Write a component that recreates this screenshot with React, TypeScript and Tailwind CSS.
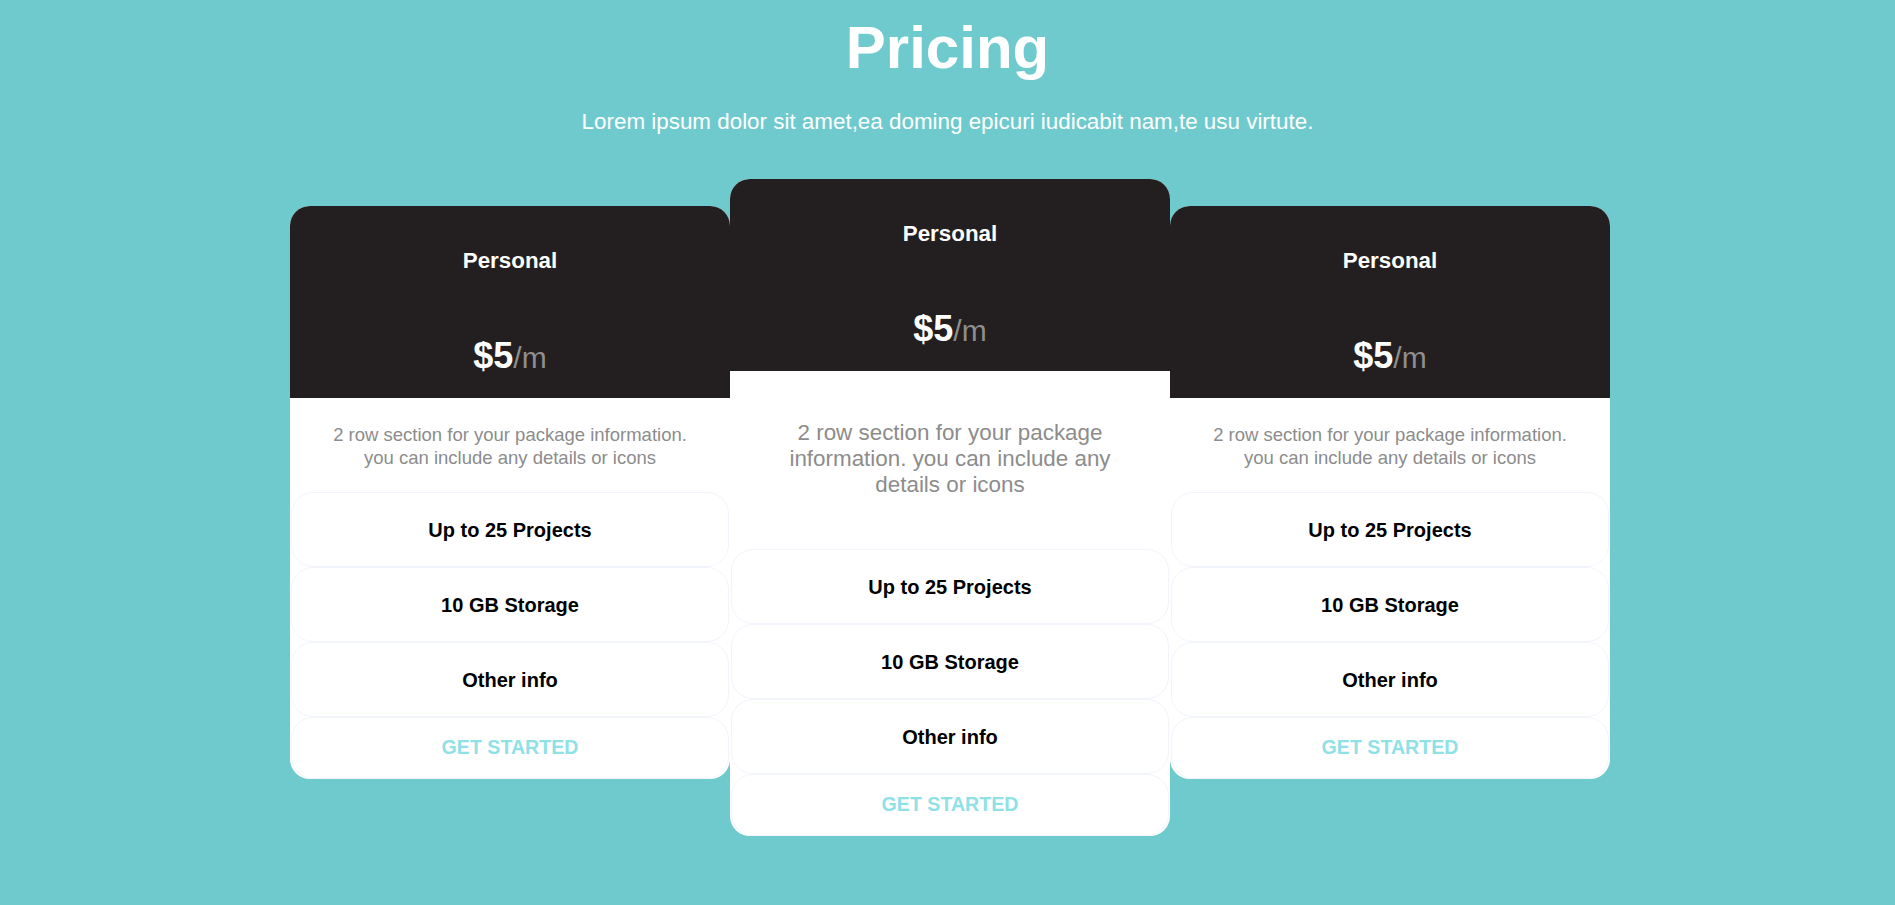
const features = ["Up to 25 Projects", "10 GB Storage", "Other info"];

function PlanCard({ featured }: { featured?: boolean }) {
  return (
    <div
      className={
        "w-[440px] shrink-0 overflow-hidden rounded-[20px] bg-white " +
        (featured ? "" : "mt-[27px]")
      }
    >
      <div className="flex h-[192px] flex-col items-center bg-[#231f20] pt-[42px] text-white">
        <div className="text-[22.4px] font-bold leading-[26px]">Personal</div>
        <div className="mt-[62px] flex h-[40px] items-baseline leading-[40px]">
          <span className="text-[36px] font-bold">$5</span>
          <span className="text-[30px] text-[#8e8e8e]">/m</span>
        </div>
      </div>
      {featured ? (
        <p className="px-8 pt-[49px] pb-[51px] text-center text-[22.4px] leading-[26px] text-[#8c8c8c]">
          2 row section for your package information. you can include any details or icons
        </p>
      ) : (
        <p className="px-8 pt-[25px] pb-[23px] text-center text-[18.5px] leading-[23px] text-[#8c8c8c]">
          2 row section for your package information. you can include any details or icons
        </p>
      )}
      <ul className="mx-px">
        {features.map((f) => (
          <li
            key={f}
            className="flex h-[75px] items-center justify-center rounded-[22px] border border-[#f2f4fc] text-[20px] font-bold text-black"
          >
            {f}
          </li>
        ))}
        <li className="flex h-[62px] items-center justify-center rounded-[22px] border border-[#f2f4fc] text-[19.6px] font-bold text-[#8fe1e6]">
          GET STARTED
        </li>
      </ul>
    </div>
  );
}

export default function App() {
  return (
    <div className="min-h-[905px] bg-[#6fcacd] font-['Liberation_Sans',Arial,sans-serif]">
      <div className="flex flex-col items-center pt-[12.5px]">
        <h1 className="text-[60px] font-bold leading-[70px] text-white">Pricing</h1>
        <p className="mt-[26px] text-[22.4px] leading-[26px] text-white">
          Lorem ipsum dolor sit amet,ea doming epicuri iudicabit nam,te usu virtute.
        </p>
      </div>
      <div className="mt-[44.5px] flex items-start justify-center pl-[5px]">
        <PlanCard />
        <PlanCard featured />
        <PlanCard />
      </div>
    </div>
  );
}
